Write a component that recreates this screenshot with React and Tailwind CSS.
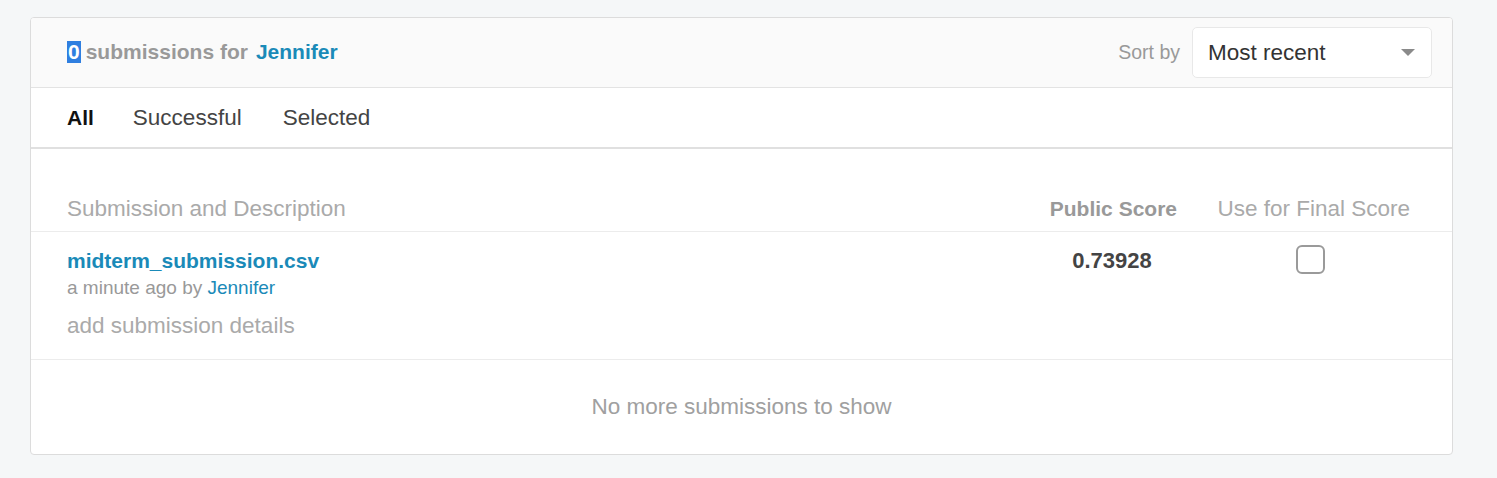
export default function App() {
  return (
    <div
      className="min-h-screen bg-[#f5f7f8] pt-[17px] pl-[30px] pr-[44px]"
      style={{ fontFamily: '"Liberation Sans", Arial, sans-serif' }}
    >
      <div className="w-[1423px] border border-[#dcdcdc] rounded-[4px] bg-white overflow-hidden">
        {/* header */}
        <div className="h-[70px] bg-[#fafafa] border-b border-[#e3e3e3] flex items-center justify-between pl-[36px] pr-[20px]">
          <div className="text-[21px] font-bold flex items-center -mt-[2px]">
            <span className="bg-[#2f7fe0] text-white px-[1px] leading-[22px]">0</span>
            <span className="text-[#999] ml-[5px]">submissions for</span>
            <span className="text-[#1a8ab8] ml-[8px]">Jennifer</span>
          </div>
          <div className="flex items-center">
            <span className="text-[19.5px] text-[#999] mr-[12px]">Sort by</span>
            <div className="w-[240px] h-[51px] bg-white border border-[#e8e8e8] rounded-[5px] flex items-center justify-between pl-[15px] pr-[16px]">
              <span className="text-[22.5px] text-[#333]">Most recent</span>
              <span className="w-0 h-0 border-l-[7px] border-r-[7px] border-t-[7px] border-l-transparent border-r-transparent border-t-[#8a8a8a]"></span>
            </div>
          </div>
        </div>

        {/* tabs */}
        <div className="h-[61px] border-b-2 border-[#e0e0e0] flex items-center pl-[36px] text-[22.5px]">
          <span className="text-[#111] font-bold text-[21px] mr-[39px]">All</span>
          <span className="text-[#444] mr-[41px]">Successful</span>
          <span className="text-[#444]">Selected</span>
        </div>

        {/* table header */}
        <div className="h-[83px] border-b border-[#ececec] flex items-baseline pt-[47px] pl-[36px] pr-[42px] text-[22.5px] leading-[26px]">
          <div className="flex-1 text-[#aaa]">Submission and Description</div>
          <div className="w-[140px] text-right text-[#999] font-bold text-[21px]">Public Score</div>
          <div className="w-[233px] text-right text-[#aaa]">Use for Final Score</div>
        </div>

        {/* row */}
        <div className="h-[128px] border-b border-[#ececec] flex pl-[36px] pr-[42px] pt-[16px]">
          <div className="flex-1 flex flex-col">
            <span className="text-[21px] font-bold text-[#1a8ab8] leading-[26px]">midterm_submission.csv</span>
            <span className="text-[19px] text-[#999] leading-[26px] mt-[1px]">
              a minute ago by <span className="text-[#1a8ab8]">Jennifer</span>
            </span>
            <span className="text-[22.5px] text-[#aaa] mt-[12px] leading-[26px]">add submission details</span>
          </div>
          <div className="w-[140px] flex justify-center text-[22px] font-bold text-[#444] leading-[26px] pl-[10px]">
            0.73928
          </div>
          <div className="w-[233px] flex justify-end pr-[85px]">
            <div className="w-[29px] h-[29px] border-2 border-[#9a9a9a] rounded-[6px] mt-[-3px]"></div>
          </div>
        </div>

        {/* footer */}
        <div className="h-[94px] flex items-center justify-center text-[22.5px] text-[#a0a0a0]">
          No more submissions to show
        </div>
      </div>
    </div>
  );
}
